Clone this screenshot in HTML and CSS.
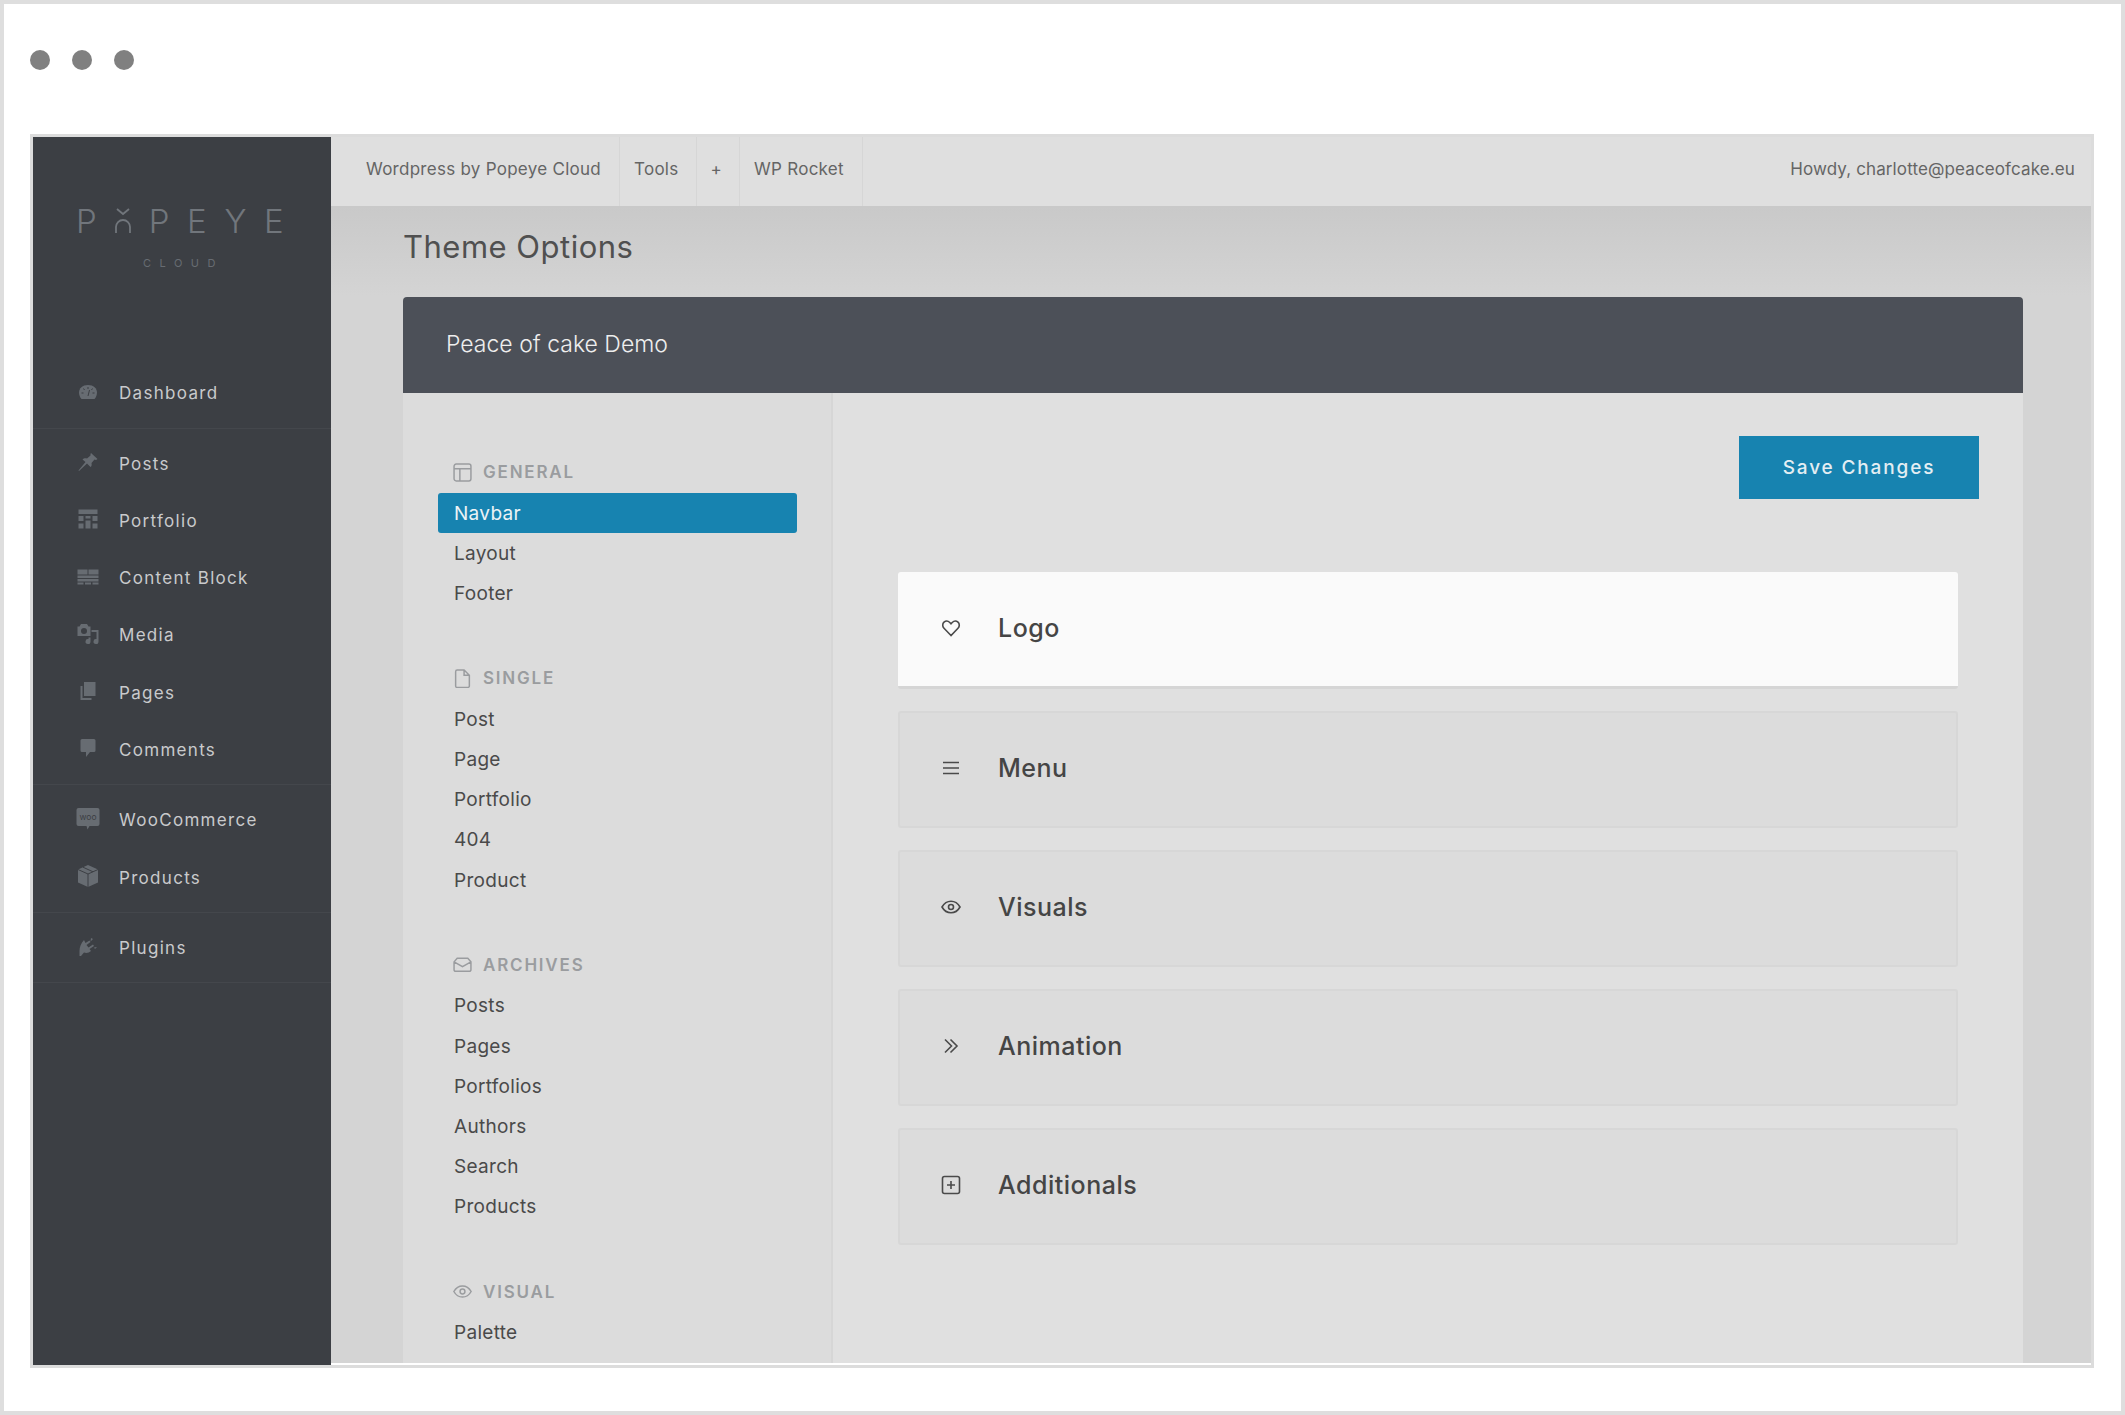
FILE: index.html
```html
<!DOCTYPE html>
<html lang="en">
<head>
    <meta charset="UTF-8">
    <meta name="viewport" content="width=device-width, initial-scale=1.0">
    <title>Theme Options</title>
    <link rel="stylesheet" href="styles.css">
</head>
<body>
    <div class="janela">
        <div class="titlebar">
            <span class="dot"></span>
            <span class="dot"></span>
            <span class="dot"></span>
        </div>

        <div class="app">
            <aside class="sidebar">
                <div class="brand">
                    <div class="brand-name">
                        <span>P</span>
                        <svg class="brand-o" viewBox="0 0 18 26"><path d="M3 1l6 5 6-5M2 25v-6a7 7 0 0 1 14 0v6"/></svg>
                        <span>P</span><span>E</span><span>Y</span><span>E</span>
                    </div>
                    <div class="brand-sub">CLOUD</div>
                </div>

                <ul class="side-group">
                    <li class="side-item">
                        <svg class="side-ico" viewBox="0 0 24 24"><path d="M12 5C6.500 5 3 8.500 3 12.500c0 2.600 1 4.800 2.500 6.500h13c1.500-1.700 2.500-3.900 2.500-6.500C21 8.500 17.500 5 12 5z"/><path class="side-det" d="M12 7v2M7.500 8.500l1 1.500M16.500 8.500l-1 1.500M5.500 13h2M18.500 13h-2M13.500 10l-1.500 6"/></svg>
                        Dashboard
                    </li>
                </ul>
                <ul class="side-group">
                    <li class="side-item">
                        <svg class="side-ico" viewBox="0 0 24 24"><path d="M15 3l6.500 6-1.500 1-1.500-.5-3 3.500c.5 2 0 3.500-1 4L11 13.500 3 21l-.5-.5 7-8.500-3-2.500c1-1 2.500-1.500 4.500-1l3.500-3V4z"/></svg>
                        Posts
                    </li>
                    <li class="side-item">
                        <svg class="side-ico" viewBox="0 0 24 24"><path d="M2.500 2.500h19V7h-19zM2.500 9h5v5h-5zM9.500 9h5v2.500h-5zM16.500 9h5v5h-5zM2.500 16.500h5v5h-5zM9.500 13.500h5v8h-5zM16.500 16.500h5v5h-5z"/></svg>
                        Portfolio
                    </li>
                    <li class="side-item">
                        <svg class="side-ico" viewBox="0 0 24 24"><path d="M1.500 4.500h10v5h-10zM12.500 4.500h10v5h-10zM1.500 10.500h21v2.500h-21zM1.500 14h21v2.500h-21zM1.500 17.500h6v2h-6zM9 17.500h6v2H9zM16.500 17.500h6v2h-6z"/></svg>
                        Content Block
                    </li>
                    <li class="side-item">
                        <svg class="side-ico" viewBox="0 0 24 24"><path fill-rule="evenodd" d="M5 2h6l1.500 2.500h2V14h-13V4.500h2zM8 6a3 3 0 1 0 0 6 3 3 0 0 0 0-6z"/><path d="M15.500 8h7v11.500a2.500 2.500 0 1 1-2-2.400V10h-5zM14.500 15.500v4a2.500 2.500 0 1 1-2-2.400v-1.600z"/></svg>
                        Media
                    </li>
                    <li class="side-item">
                        <svg class="side-ico" viewBox="0 0 24 24"><path d="M8 3h11.500v14H8zM4.500 7h2v12h9v2h-11z"/></svg>
                        Pages
                    </li>
                    <li class="side-item">
                        <svg class="side-ico" viewBox="0 0 24 24"><path d="M6 3h12a1.500 1.500 0 0 1 1.500 1.500v10A1.500 1.500 0 0 1 18 16h-4l-4 5v-5H6a1.500 1.500 0 0 1-1.500-1.500v-10A1.500 1.500 0 0 1 6 3z"/></svg>
                        Comments
                    </li>
                </ul>
                <ul class="side-group">
                    <li class="side-item">
                        <svg class="side-ico" viewBox="0 0 24 24"><path d="M2.500 1h19a2 2 0 0 1 2 2v14a2 2 0 0 1-2 2h-8l-2 3.500-1-3.500h-8a2 2 0 0 1-2-2V3a2 2 0 0 1 2-2z"/><text class="woo-txt" x="12" y="13" text-anchor="middle">woo</text></svg>
                        WooCommerce
                    </li>
                    <li class="side-item">
                        <svg class="side-ico" viewBox="0 0 24 24"><path d="M12 1l10 4.500v13L12 23 2 18.500v-13z"/><path class="side-det" d="M2 5.500L12 10l10-4.500M12 10v13M7 3.200l10 4.600"/></svg>
                        Products
                    </li>
                </ul>
                <ul class="side-group">
                    <li class="side-item">
                        <svg class="side-ico" viewBox="0 0 24 24"><path d="M8 5l1.500 3 4-2.500 1 1.500-4 3 2 2.500 4.500-3 1 1.500-4.500 3 1.500 2c-2 2-5 2.500-7 1.500L5 21H3.500v-5c0-4 1.500-8 4.500-11z"/><path d="M15 3l2 1-2.500 2.500zM18 12.500l3-.5-2 2z"/></svg>
                        Plugins
                    </li>
                </ul>
            </aside>

            <div class="conteudo">
                <div class="topbar">
                    <a class="top-link">Wordpress by Popeye Cloud</a>
                    <a class="top-link top-tools">Tools</a>
                    <a class="top-link top-plus">+</a>
                    <a class="top-link top-rocket">WP Rocket</a>
                    <span class="howdy">Howdy, charlotte@peaceofcake.eu</span>
                </div>

                <main class="area">
                    <h1 class="titulo">Theme Options</h1>

                    <section class="painel">
                        <div class="painel-topo">Peace of cake Demo</div>

                        <div class="painel-corpo">
                            <nav class="opcoes">
                                <div class="secao">
                                    <div class="secao-nome">
                                        <svg class="secao-ico" viewBox="0 0 18 18"><rect x="1" y="1" width="16" height="16" rx="2"/><path d="M1 5.500h16M6.500 5.500V17"/></svg>
                                        GENERAL
                                    </div>
                                    <a class="opcao ativa">Navbar</a>
                                    <a class="opcao">Layout</a>
                                    <a class="opcao">Footer</a>
                                </div>
                                <div class="secao">
                                    <div class="secao-nome">
                                        <svg class="secao-ico" viewBox="0 0 18 18"><path d="M2.500 2.500A1.500 1.500 0 0 1 4 1h6.500l5 5v10a1.500 1.500 0 0 1-1.500 1.500H4A1.500 1.500 0 0 1 2.500 16zM10.500 1v5h5"/></svg>
                                        SINGLE
                                    </div>
                                    <a class="opcao">Post</a>
                                    <a class="opcao">Page</a>
                                    <a class="opcao">Portfolio</a>
                                    <a class="opcao">404</a>
                                    <a class="opcao">Product</a>
                                </div>
                                <div class="secao">
                                    <div class="secao-nome">
                                        <svg class="secao-ico" viewBox="0 0 18 18"><path d="M1 6.500L4 3h10l3 3.500V14a1.500 1.500 0 0 1-1.500 1.500h-13A1.500 1.500 0 0 1 1 14zM1 6.500l8 4.500 8-4.500"/></svg>
                                        ARCHIVES
                                    </div>
                                    <a class="opcao">Posts</a>
                                    <a class="opcao">Pages</a>
                                    <a class="opcao">Portfolios</a>
                                    <a class="opcao">Authors</a>
                                    <a class="opcao">Search</a>
                                    <a class="opcao">Products</a>
                                </div>
                                <div class="secao">
                                    <div class="secao-nome">
                                        <svg class="secao-ico" viewBox="0 0 18 18"><path d="M.8 9C2.800 5.500 5.700 3.700 9 3.700s6.200 1.800 8.200 5.300c-2 3.500-4.900 5.300-8.200 5.300S2.800 12.500.8 9z"/><circle cx="9" cy="9" r="2.300"/></svg>
                                        VISUAL
                                    </div>
                                    <a class="opcao">Palette</a>
                                </div>
                            </nav>

                            <div class="ajustes">
                                <div class="acoes">
                                    <button class="salvar">Save Changes</button>
                                </div>
                                <div class="cartao aberto">
                                    <svg class="cartao-ico" viewBox="0 0 20 20"><path d="M10 17.500L3 10.300C1.300 8.500 1.300 5.800 3 4.200c1.700-1.500 4.200-1.300 5.800.3L10 5.800l1.200-1.300c1.600-1.600 4.100-1.800 5.800-.3 1.700 1.600 1.700 4.300 0 6.100z"/></svg>
                                    Logo
                                </div>
                                <div class="cartao">
                                    <svg class="cartao-ico" viewBox="0 0 20 20"><path d="M2 4.500h16M2 10h16M2 15.500h16"/></svg>
                                    Menu
                                </div>
                                <div class="cartao">
                                    <svg class="cartao-ico" viewBox="0 0 20 20"><path d="M1 10c2.200-3.900 5.400-5.800 9-5.800s6.800 1.900 9 5.800c-2.200 3.900-5.400 5.800-9 5.800S3.200 13.900 1 10z"/><circle cx="10" cy="10" r="2.500"/></svg>
                                    Visuals
                                </div>
                                <div class="cartao">
                                    <svg class="cartao-ico" viewBox="0 0 20 20"><path d="M4 3.500l6.500 6.500L4 16.500M9.500 3.500L16 10l-6.500 6.500"/></svg>
                                    Animation
                                </div>
                                <div class="cartao">
                                    <svg class="cartao-ico" viewBox="0 0 20 20"><rect x="1.500" y="1.500" width="17" height="17" rx="2"/><path d="M10 6v8M6 10h8"/></svg>
                                    Additionals
                                </div>
                            </div>
                        </div>
                    </section>
                </main>
            </div>
        </div>
    </div>
</body>
</html>
```

FILE: styles.css
```css
*{
    margin: 0;
    padding: 0;
    box-sizing: border-box;
}
body{
    background-color: #fff;
    font-family: "Inter", "Liberation Sans", sans-serif;
}
ul{
    list-style: none;
}

/* moldura externa */
.janela{
    width: 2125px;
    height: 1415px;
    border: 4px solid #dedede;
    padding: 0 27px 43px 26px;
    display: flex;
    flex-direction: column;
    overflow: hidden;
}
.titlebar{
    height: 130px;
    flex-shrink: 0;
    display: flex;
    gap: 22px;
    padding-top: 46px;
}
.dot{
    width: 20px;
    height: 20px;
    border-radius: 50%;
    background-color: #808080;
}
.app{
    flex: 1;
    min-height: 0;
    display: flex;
    border: 3px solid #dcdcdc;
}

/* menu lateral */
.sidebar{
    width: 298px;
    flex-shrink: 0;
    background-color: #3c3f44;
    color: #c9cacc;
    font-size: 17px;
    letter-spacing: 1.300px;
}
.brand{
    height: 221px;
    padding: 71px 0 0 43px;
}
.brand-name{
    width: 209px;
    display: flex;
    justify-content: space-between;
    align-items: center;
    font-size: 33px;
    font-weight: 300;
    line-height: 24px;
    color: #71767c;
}
.brand-o{
    width: 18px;
    height: 26px;
    fill: none;
    stroke: #71767c;
    stroke-width: 1.800;
}
.brand-sub{
    margin: 25px 0 0 67px;
    font-size: 11px;
    line-height: 9px;
    letter-spacing: 8.500px;
    color: #676c72;
}
.side-group{
    padding: 6.200px 0;
    border-bottom: 1px solid #44474c;
}
.side-item{
    height: 57.200px;
    display: flex;
    align-items: center;
    padding: 1px 0 0 86px;
    position: relative;
}
.side-ico{
    position: absolute;
    left: 43px;
    top: 15.500px;
    width: 24px;
    height: 24px;
    fill: #676c72;
}
.side-det{
    fill: none;
    stroke: #3c3f44;
    stroke-width: 1;
}
.woo-txt{
    font-size: 8.500px;
    letter-spacing: 0;
    fill: #3c3f44;
}

/* barra de cima */
.conteudo{
    flex: 1;
    min-width: 0;
    display: flex;
    flex-direction: column;
}
.topbar{
    height: 69px;
    flex-shrink: 0;
    display: flex;
    align-items: stretch;
    background-color: #dfdfdf;
    font-size: 17px;
    letter-spacing: 0.270px;
    color: #656565;
}
.top-link{
    display: flex;
    align-items: center;
    padding: 0 18px 6px 35px;
    border-right: 1px solid #d6d6d6;
}
.top-tools{
    padding: 0 18px 6px 14px;
}
.top-plus{
    padding: 0 17px 6px 13px;
}
.top-rocket{
    padding: 0 18px 6px 14px;
}
.howdy{
    margin-left: auto;
    padding: 0 16px 6px 0;
    align-self: center;
    letter-spacing: 0.120px;
}

/* area principal */
.area{
    flex: 1;
    min-height: 0;
    overflow: hidden;
    background: linear-gradient(#c9c9c9, #d4d4d4 90px);
    border-bottom: 2px solid #fff;
    padding: 0 68px 0 72px;
}
.titulo{
    height: 91px;
    padding-top: 21px;
    font-size: 31px;
    font-weight: 400;
    letter-spacing: 0.500px;
    line-height: 40px;
    color: #505050;
}
.painel{
    height: 100%;
    display: flex;
    flex-direction: column;
}
.painel-topo{
    height: 96px;
    flex-shrink: 0;
    display: flex;
    align-items: center;
    padding: 0 0 2px 43px;
    background-color: #4c5058;
    border-radius: 4px 4px 0 0;
    font-size: 23px;
    font-weight: 300;
    color: #eeeeee;
}
.painel-corpo{
    flex: 1;
    display: flex;
    background-color: #e0e0e0;
}

/* opcoes da esquerda */
.opcoes{
    width: 430px;
    flex-shrink: 0;
    background-color: #dcdcdc;
    border-right: 2px solid #d6d6d6;
    padding: 58px 34px 0 35px;
}
.secao{
    margin-bottom: 43.700px;
}
.secao-nome{
    height: 42px;
    display: flex;
    align-items: center;
    gap: 11px;
    padding-left: 15px;
    font-size: 17px;
    font-weight: 600;
    letter-spacing: 1.800px;
    color: #9a9c9f;
}
.secao-ico{
    width: 19px;
    height: 19px;
    fill: none;
    stroke: #9a9c9f;
    stroke-width: 1.400;
}
.opcao{
    display: flex;
    align-items: center;
    height: 40.200px;
    padding-left: 16px;
    border-radius: 3px;
    font-size: 19px;
    letter-spacing: 0.300px;
    color: #4a4a4a;
}
.ativa{
    background-color: #1783b0;
    color: #ecf3f6;
}

/* coluna da direita */
.ajustes{
    flex: 1;
    padding: 43px 44px 0 65px;
}
.acoes{
    display: flex;
    justify-content: flex-end;
    margin-bottom: 73px;
}
.salvar{
    width: 240px;
    height: 63px;
    border: none;
    background-color: #1783b0;
    color: #e3eef3;
    font-family: inherit;
    font-size: 19px;
    font-weight: 500;
    letter-spacing: 1.850px;
}
.cartao{
    width: 1060px;
    height: 117px;
    margin-bottom: 22px;
    display: flex;
    align-items: center;
    padding: 0 0 3px 41px;
    gap: 37px;
    background-color: #dcdcdc;
    border: 2px solid #d7d7d7;
    border-radius: 3px;
    font-size: 25px;
    font-weight: 500;
    letter-spacing: 0.500px;
    color: #454545;
}
.aberto{
    background-color: #fafafa;
    border: none;
    border-bottom: 3px solid #d5d5d5;
    padding-left: 43px;
}
.cartao-ico{
    width: 20px;
    height: 20px;
    fill: none;
    stroke: #4a4a4a;
    stroke-width: 1.600;
}
```
